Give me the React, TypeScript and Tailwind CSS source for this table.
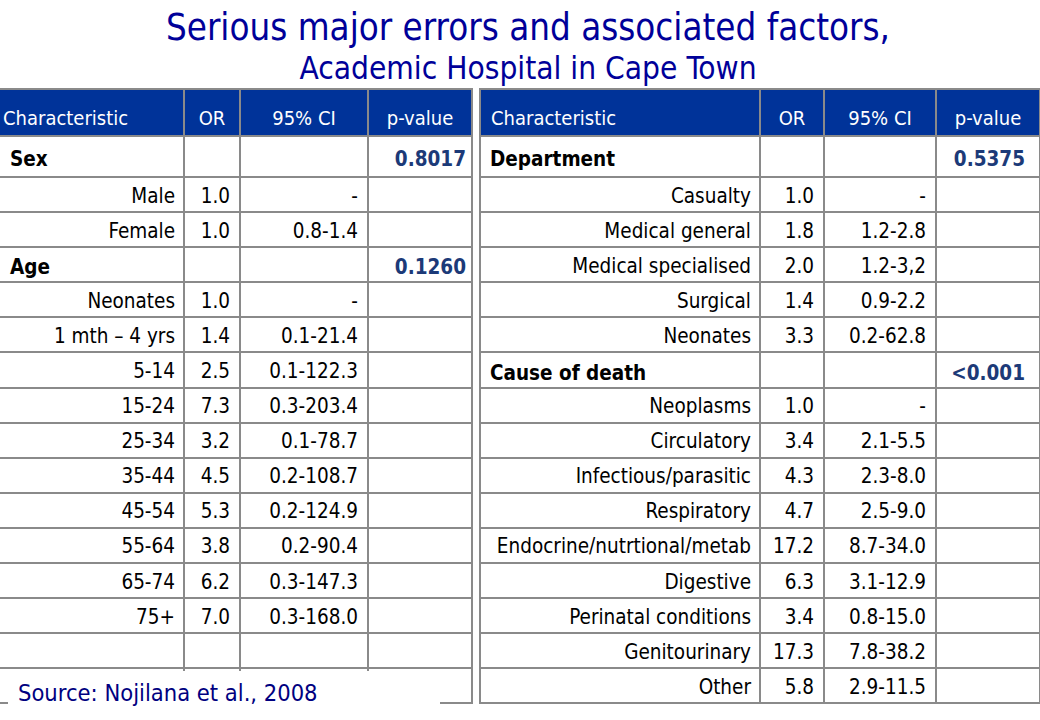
import React from 'react';

type Row = { label: string; or?: string; ci?: string; p?: string; head?: boolean };

const leftRows: Row[] = [
  { label: 'Sex', p: '0.8017', head: true },
  { label: 'Male', or: '1.0', ci: '-' },
  { label: 'Female', or: '1.0', ci: '0.8-1.4' },
  { label: 'Age', p: '0.1260', head: true },
  { label: 'Neonates', or: '1.0', ci: '-' },
  { label: '1 mth \u2013 4 yrs', or: '1.4', ci: '0.1-21.4' },
  { label: '5-14', or: '2.5', ci: '0.1-122.3' },
  { label: '15-24', or: '7.3', ci: '0.3-203.4' },
  { label: '25-34', or: '3.2', ci: '0.1-78.7' },
  { label: '35-44', or: '4.5', ci: '0.2-108.7' },
  { label: '45-54', or: '5.3', ci: '0.2-124.9' },
  { label: '55-64', or: '3.8', ci: '0.2-90.4' },
  { label: '65-74', or: '6.2', ci: '0.3-147.3' },
  { label: '75+', or: '7.0', ci: '0.3-168.0' },
  { label: '' },
  { label: '' },
];

const rightRows: Row[] = [
  { label: 'Department', p: '0.5375', head: true },
  { label: 'Casualty', or: '1.0', ci: '-' },
  { label: 'Medical general', or: '1.8', ci: '1.2-2.8' },
  { label: 'Medical specialised', or: '2.0', ci: '1.2-3,2' },
  { label: 'Surgical', or: '1.4', ci: '0.9-2.2' },
  { label: 'Neonates', or: '3.3', ci: '0.2-62.8' },
  { label: 'Cause of death', p: '<0.001', head: true },
  { label: 'Neoplasms', or: '1.0', ci: '-' },
  { label: 'Circulatory', or: '3.4', ci: '2.1-5.5' },
  { label: 'Infectious/parasitic', or: '4.3', ci: '2.3-8.0' },
  { label: 'Respiratory', or: '4.7', ci: '2.5-9.0' },
  { label: 'Endocrine/nutrtional/metab', or: '17.2', ci: '8.7-34.0' },
  { label: 'Digestive', or: '6.3', ci: '3.1-12.9' },
  { label: 'Perinatal conditions', or: '3.4', ci: '0.8-15.0' },
  { label: 'Genitourinary', or: '17.3', ci: '7.8-38.2' },
  { label: 'Other', or: '5.8', ci: '2.9-11.5' },
];

const cell = 'border-2 border-[#8a8a8a] p-0 whitespace-nowrap';

function OddsTable({
  rows,
  widths,
  className,
  boldPad,
  pPad,
}: {
  rows: Row[];
  widths: number[];
  className: string;
  boldPad: string;
  pPad: string;
}) {
  return (
    <table className={`table-fixed border-collapse text-[20.5px] leading-[24px] text-black ${className}`}>
      <colgroup>
        {widths.map((w, i) => (
          <col key={i} style={{ width: w }} />
        ))}
      </colgroup>
      <thead>
        <tr className="h-[47px] bg-[#003399] text-white text-[20px]">
          <th className={`${cell} border-[#6d7fa8] text-left align-bottom font-normal pb-[5px] pl-[10px]`}>Characteristic</th>
          <th className={`${cell} border-[#6d7fa8] text-center align-bottom font-normal pb-[5px]`}>OR</th>
          <th className={`${cell} border-[#6d7fa8] text-center align-bottom font-normal pb-[5px]`}>95% CI</th>
          <th className={`${cell} border-[#6d7fa8] text-center align-bottom font-normal pb-[5px]`}>p-value</th>
        </tr>
      </thead>
      <tbody>
        {rows.map((r, i) => (
          <tr key={i} className={i === 0 ? 'h-[41px]' : 'h-[35.1px]'}>
            {r.head ? (
              <td className={`${cell} ${boldPad} pt-[5px] text-left font-bold`}>{r.label}</td>
            ) : (
              <td className={`${cell} pr-[8px] pt-[2px] text-right`}>{r.label}</td>
            )}
            <td className={`${cell} pr-[9px] pt-[2px] text-right`}>{r.or}</td>
            <td className={`${cell} pr-[9px] pt-[2px] text-right`}>{r.ci}</td>
            <td className={`${cell} ${pPad} pt-[5px] text-right font-bold text-[#1c3a78]`}>{r.p}</td>
          </tr>
        ))}
      </tbody>
    </table>
  );
}

export default function App() {
  return (
    <div
      className="relative w-[1040px] h-[720px] overflow-hidden bg-white"
      style={{ fontFamily: '"DejaVu Sans Condensed", "DejaVu Sans", sans-serif' }}
    >
      <div className="h-[88px] pl-[16px] flex flex-col items-center text-[#000099]">
        <div className="text-[36.4px] leading-[40px] pt-[8px]">Serious major errors and associated factors,</div>
        <div className="text-[31.4px] leading-[36px] mt-[2px]">Academic Hospital in Cape Town</div>
      </div>

      <div className="flex gap-[6px] -ml-[9px]">
        <OddsTable
          rows={leftRows}
          widths={[192, 56, 128, 104]}
          className="w-[480px] shrink-0"
          boldPad="pl-[17px]"
          pPad="pr-[5px]"
        />
        <OddsTable
          rows={rightRows}
          widths={[280, 64, 112, 104]}
          className="w-[560px] shrink-0"
          boldPad="pl-[9px]"
          pPad="pr-[14px]"
        />
      </div>

      <div className="absolute left-[8px] top-[671px] w-[432px] h-[49px] bg-white pl-[10px] pt-[5px] text-[23.5px] text-[#000080]">
        Source: Nojilana et al., 2008
      </div>
    </div>
  );
}
